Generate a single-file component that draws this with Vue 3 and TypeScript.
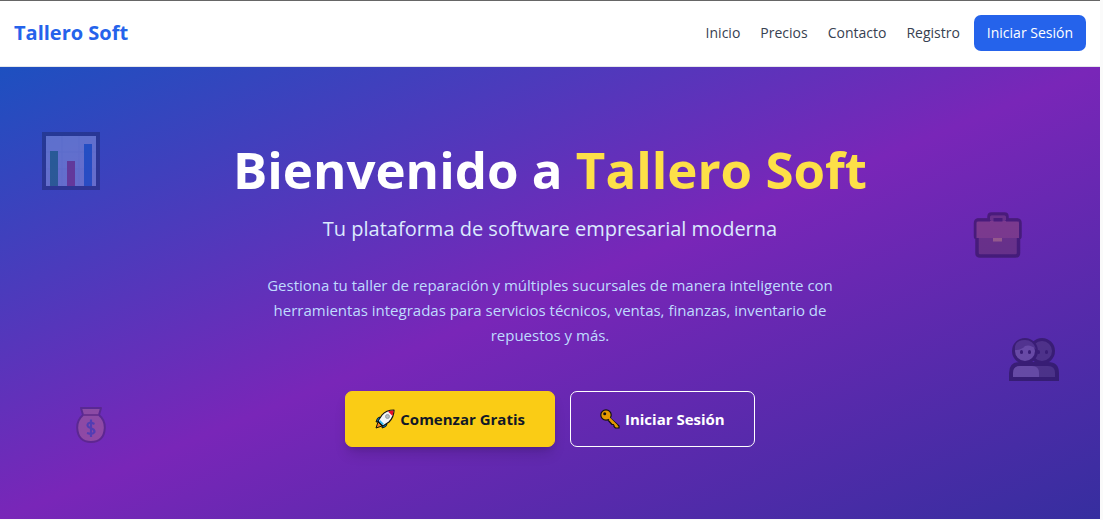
<script setup lang="ts">
interface NavLink {
  label: string
  href: string
}

const links: NavLink[] = [
  { label: 'Inicio', href: '#inicio' },
  { label: 'Precios', href: '#precios' },
  { label: 'Contacto', href: '#contacto' },
  { label: 'Registro', href: '#registro' },
]
</script>

<template>
  <div class="page">
    <header class="topbar">
      <a class="brand" href="#inicio">Tallero Soft</a>
      <nav class="nav">
        <a v-for="link in links" :key="link.label" class="nav-link" :href="link.href">{{ link.label }}</a>
        <button class="login" type="button">Iniciar Sesión</button>
      </nav>
    </header>

    <main class="hero">
      <svg class="deco chart" viewBox="0 0 58 58" aria-hidden="true">
        <rect x="2" y="2" width="54" height="54" fill="#c8d0f0" stroke="#12183a" stroke-width="4" />
        <path d="M20 4v50M37 4v50M4 20h50M4 37h50" stroke="#b9c4e8" stroke-width="1" />
        <rect x="8" y="19" width="8" height="35" fill="#10893e" />
        <rect x="25" y="29" width="8" height="25" fill="#c3224e" />
        <rect x="42" y="12" width="8" height="42" fill="#0063d1" />
      </svg>
      <svg class="deco case" viewBox="0 0 50 46" aria-hidden="true">
        <path d="M16 8V4.500Q16 2 18.500 2H31.500Q34 2 34 4.500V8H44Q47 8 47 11V24Q47 26 45.500 26V41Q45.500 44 42.500 44H7Q4 44 4 41V26Q2.500 26 2.500 24V11Q2.500 8 5.500 8Z" fill="#6d4534" stroke="#000" stroke-width="3.500" stroke-linejoin="round" />
        <path d="M5.500 9H44Q46 9 46 11V26H3.500V11Q3.500 9 5.500 9Z" fill="#a8623f" />
        <path d="M17 8V5Q17 3.500 18.500 3.500H31.500Q33 3.500 33 5V8Z" fill="#6d4534" />
        <path d="M4 8H17M33 8H45" stroke="#000" stroke-width="3" />
        <rect x="20.500" y="6" width="9" height="3.500" fill="#000" />
        <rect x="20" y="26" width="9" height="3.500" fill="#ffc83d" />
      </svg>
      <svg class="deco people" viewBox="0 0 50 44" aria-hidden="true">
        <path d="M2 42V36Q2 27 11 27H39Q48 27 48 36V42Z" fill="#444" stroke="#000" stroke-width="4" />
        <path d="M4 40V36Q4 29 11 29H23Q30 29 30 36V40Z" fill="#98939f" />
        <circle cx="33" cy="14" r="11.500" fill="#444" stroke="#000" stroke-width="3" />
        <circle cx="16" cy="14" r="11.500" fill="#98939f" stroke="#000" stroke-width="3" />
        <path d="M6 13Q5 3 16 3Q24 3 27 12Q21 7 16 9Q13 13 6 13Z" fill="#4c4854" />
        <g fill="#000">
          <rect x="11" y="13" width="3" height="4" rx="1.500" />
          <rect x="19" y="13" width="3" height="4" rx="1.500" />
          <rect x="28" y="13" width="3" height="4" rx="1.500" />
          <rect x="36" y="13" width="3" height="4" rx="1.500" />
        </g>
      </svg>
      <svg class="deco money" viewBox="0 0 30 38" aria-hidden="true">
        <path d="M5 2H25L23 9Q29 14 28.800 22Q28 36 15 36T1.200 22Q1 14 7 9Z" fill="#d99078" stroke="#33203a" stroke-width="2" stroke-linejoin="round" />
        <path d="M8 9H22" stroke="#6b3d30" stroke-width="2" />
        <path d="M18.500 18Q12 15 11.500 19C11 23 19 21 18.500 26Q17 29 11 27M15 13.500V31" fill="none" stroke="#1466a8" stroke-width="2.200" />
      </svg>

      <h1 class="title">Bienvenido a <span class="accent">Tallero Soft</span></h1>
      <p class="subtitle">Tu plataforma de software empresarial moderna</p>
      <p class="lead">
        Gestiona tu taller de reparación y múltiples sucursales de manera inteligente con
        herramientas integradas para servicios técnicos, ventas, finanzas, inventario de
        repuestos y más.
      </p>
      <div class="actions">
        <button class="cta primary" type="button">
          <svg class="glyph" viewBox="0 0 20 20" aria-hidden="true">
            <path d="M5 8Q2 8 1 13L6 12ZM12 15Q12 18 7 19L8 14Z" fill="#0099e5" stroke="#111" stroke-linejoin="round" />
            <path d="M1 19L3 13L7 17Z" fill="#f58220" stroke="#111" />
            <path d="M19 1Q11 1 7 6L3 12L8 17L14 13Q19 8 19 1Z" fill="#f2f5f8" stroke="#111" stroke-width="1.200" stroke-linejoin="round" />
            <path d="M18.500 1.500Q15 1.500 13 2.500L17.500 7Q18.500 4 18.500 1.500Z" fill="#e81224" />
            <path d="M5 11L9 15L7.500 16L4 12.500Z" fill="#27b4ee" />
            <circle cx="12.500" cy="7.500" r="2" fill="#b6bdc4" stroke="#8b939b" stroke-width="0.800" />
          </svg>
          <span>Comenzar Gratis</span>
        </button>
        <button class="cta outline" type="button">
          <svg class="glyph" viewBox="0 0 20 20" aria-hidden="true">
            <path d="M10 9L19 17V19H15.500L14 17.500V15.500H12L8 11Z" fill="#e69a00" stroke="#111" stroke-width="1.200" stroke-linejoin="round" />
            <circle cx="6" cy="6" r="5.200" fill="#e69a00" stroke="#111" stroke-width="1.200" />
            <path d="M8.500 8.500L17 17" stroke="#e69a00" stroke-width="2" />
            <circle cx="4.700" cy="4.700" r="1.500" fill="#111" />
          </svg>
          <span>Iniciar Sesión</span>
        </button>
      </div>
    </main>
  </div>
</template>

<style>
body {
  margin: 0;
  background: #fafafa;
}
</style>

<style scoped>
.page {
  margin-right: 3px;
  font-family: "Segoe UI", "Open Sans", "Noto Sans", sans-serif;
}

.topbar {
  display: flex;
  align-items: center;
  justify-content: space-between;
  padding: 14px 14px 15px;
  border-top: 1px solid #666;
  border-bottom: 1px solid #e5e7eb;
  background: #fff;
  box-shadow: 3px -35px 0 -34px #666;
}

.brand {
  color: #2563eb;
  font-size: 20px;
  font-weight: 700;
  line-height: 28px;
  text-decoration: none;
}

.nav {
  display: flex;
  align-items: center;
  gap: 20px;
}

.nav-link {
  color: #374151;
  font-size: 14px;
  line-height: 20px;
  text-decoration: none;
}

.login {
  margin-left: -6px;
  padding: 8px 13px;
  border: 0;
  border-radius: 7px;
  background: #2563eb;
  color: #fff;
  font: inherit;
  font-size: 14px;
  line-height: 20px;
}

.hero {
  position: relative;
  display: flex;
  flex-direction: column;
  align-items: center;
  padding: 74px 28px 72px;
  background: linear-gradient(to bottom right, #1d50c0, #7926b8, #362e9f);
  text-align: center;
}

.deco {
  position: absolute;
  opacity: 0.3;
}

.chart {
  top: 65px;
  left: 42px;
  width: 58px;
  height: 58px;
}

.case {
  top: 145px;
  right: 77px;
  width: 50px;
  height: 46px;
}

.people {
  top: 270px;
  right: 41px;
  width: 50px;
  height: 44px;
}

.money {
  top: 339px;
  left: 76px;
  width: 30px;
  height: 38px;
}

.title {
  margin: 0;
  color: #fff;
  font-size: 51px;
  font-weight: 700;
  line-height: 56px;
}

.accent {
  color: #fde047;
}

.subtitle {
  margin: 18px 0 0;
  color: #dbeafe;
  font-size: 20px;
  line-height: 28px;
}

.lead {
  max-width: 590px;
  margin: 30px 0 0;
  color: #bfdbfe;
  font-size: 15px;
  line-height: 25px;
}

.actions {
  display: flex;
  gap: 15px;
  margin-top: 43px;
}

.cta {
  display: flex;
  align-items: center;
  gap: 5px;
  padding: 14px 29px;
  border: 1px solid transparent;
  border-radius: 7px;
  font: inherit;
  font-size: 15px;
  font-weight: 700;
  line-height: 26px;
}

.primary {
  border-color: #facc15;
  background: #facc15;
  color: #111827;
  box-shadow: 0 9px 14px -3px rgba(0, 0, 0, 0.15), 0 4px 6px -4px rgba(0, 0, 0, 0.15);
}

.outline {
  border-color: #fff;
  background: transparent;
  color: #fff;
}

.glyph {
  width: 20px;
  height: 20px;
}
</style>
